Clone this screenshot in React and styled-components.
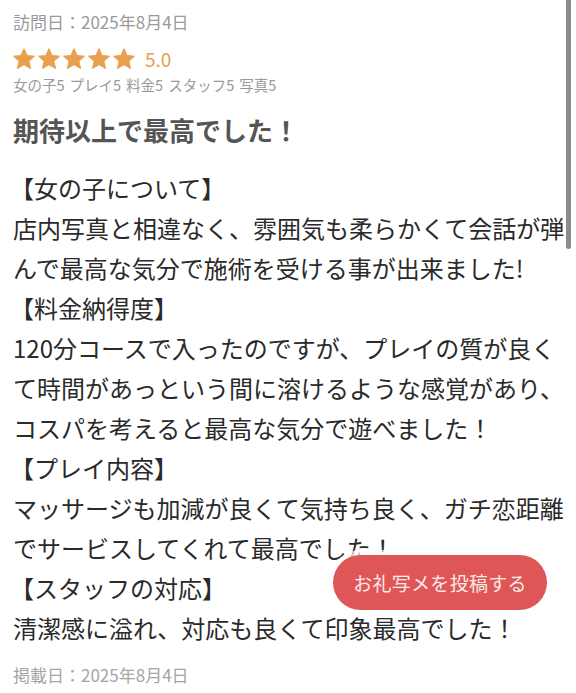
import React from 'react';
import styled, { createGlobalStyle } from 'styled-components';

const GlobalStyle = createGlobalStyle`
    html, body {
        margin: 0;
        padding: 0;
        background: #fff;
    }
    body {
        font-family: "Noto Sans CJK JP", "Noto Sans", sans-serif;
        overflow: hidden;
    }
`;

const sections = [
    {
        title: '【女の子について】',
        text: '店内写真と相違なく、雰囲気も柔らかくて会話が弾んで最高な気分で施術を受ける事が出来ました!',
    },
    {
        title: '【料金納得度】',
        text: '120分コースで入ったのですが、プレイの質が良くて時間があっという間に溶けるような感覚があり、コスパを考えると最高な気分で遊べました！',
    },
    {
        title: '【プレイ内容】',
        text: 'マッサージも加減が良くて気持ち良く、ガチ恋距離でサービスしてくれて最高でした！',
    },
    {
        title: '【スタッフの対応】',
        text: '清潔感に溢れ、対応も良くて印象最高でした！',
    },
];

const scores = ['女の子5', 'プレイ5', '料金5', 'スタッフ5', '写真5'];

const Star = () => (
    <svg width="24" height="24" viewBox="0 0 24 24">
        <path
            d="M12 1.6l3.1 6.9 7.4.7-5.6 5 1.7 7.3L12 17.7l-6.6 3.8 1.7-7.3-5.6-5 7.4-.7z"
            fill="#e8a04e"
            stroke="#e8a04e"
            strokeWidth="1"
            strokeLinejoin="round"
        />
    </svg>
);

const App = () => {
    return (
        <Page>
            <GlobalStyle />
            <Review>
                <DateLine>訪問日：2025年8月4日</DateLine>
                <RatingRow>
                    <Stars>
                        {[0, 1, 2, 3, 4].map((i) => <Star key={i} />)}
                    </Stars>
                    <RatingValue>5.0</RatingValue>
                </RatingRow>
                <Scores>
                    {scores.map((s) => <span key={s}>{s}</span>)}
                </Scores>
                <Title>期待以上で最高でした！</Title>
                <Body>
                    {sections.map((section) => (
                        <div key={section.title}>
                            <SectionTitle>{section.title}</SectionTitle>
                            <SectionText>{section.text}</SectionText>
                        </div>
                    ))}
                </Body>
                <PostedLine>掲載日：2025年8月4日</PostedLine>
            </Review>
            <ScrollThumb />
            <PostButton>お礼写メを投稿する</PostButton>
        </Page>
    );
};

const Page = styled.div`
    position: relative;
    width: 576px;
    height: 693px;
    overflow: hidden;
`;

const Review = styled.article`
    padding: 11px 0 0 13px;
    width: 556px;
`;

const DateLine = styled.div`
    font-size: 17px;
    line-height: 22px;
    color: #9a9a9a;
`;

const PostedLine = styled(DateLine)`
    margin-top: 16px;
    color: #a5a5a5;
`;

const RatingRow = styled.div`
    display: flex;
    align-items: center;
    margin-top: 14px;
    height: 24px;
`;

const Stars = styled.div`
    display: flex;
    gap: 1px;
    margin-left: -1px;
`;

const RatingValue = styled.span`
    margin-left: 9px;
    font-size: 19px;
    line-height: 24px;
    color: #e8a04e;
`;

const Scores = styled.div`
    display: flex;
    gap: 5px;
    margin-top: 5px;
    font-size: 14.5px;
    line-height: 18px;
    color: #9a9a9a;
`;

const Title = styled.h1`
    margin: 19px 0 0;
    font-size: 26px;
    line-height: 34px;
    font-weight: 700;
    color: #555;
`;

const Body = styled.div`
    margin-top: 21px;
    font-size: 24px;
    line-height: 40px;
    color: #2a2a2a;
`;

const SectionTitle = styled.div`
    margin-left: -3px;
`;

const SectionText = styled.div`
    line-break: normal;
`;

const ScrollThumb = styled.div`
    position: absolute;
    top: -4px;
    right: 5px;
    width: 5px;
    height: 253px;
    border-radius: 3px;
    background: #8c8c8c;
`;

const PostButton = styled.button`
    position: absolute;
    right: 29px;
    bottom: 83px;
    width: 214px;
    height: 55px;
    border: none;
    border-radius: 28px;
    background: #df5657;
    color: #fbeaea;
    font-family: "Noto Sans CJK JP", sans-serif;
    font-size: 19px;
    letter-spacing: 0.3px;
    box-shadow: 0 0 0 5px rgba(255, 255, 255, 0.7);
    cursor: pointer;
`;

export default App;
